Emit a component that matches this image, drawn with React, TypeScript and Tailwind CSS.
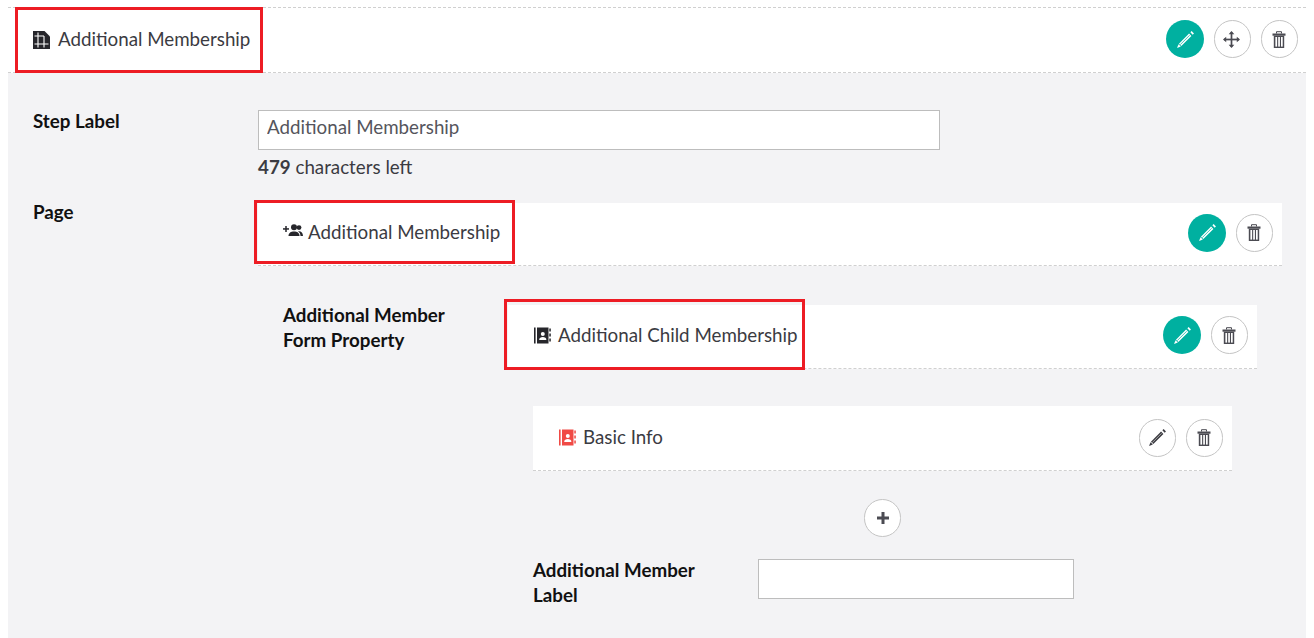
import { ReactNode } from "react";

function PencilIcon({ stripe }: { stripe: string }) {
  return (
    <svg viewBox="0 0 18 18" className="h-[19px] w-[19px]">
      <path d="M13.6 2.2l1.2-1.2 2.2 2.2-1.2 1.2z" fill="currentColor" />
      <path d="M12.4 3.4l2.2 2.2-9.6 9.6-2.2-2.2z" fill="currentColor" />
      <path d="M2.4 13.4l2.2 2.2-3.6 1.4z" fill="currentColor" />
      <path d="M12.9 5l-9 9" stroke={stripe} strokeWidth="0.7" fill="none" />
    </svg>
  );
}

function TrashIcon() {
  return (
    <svg viewBox="0 0 14 17" className="h-[17px] w-[14px]">
      <path d="M4.5 2.5V.7h5v1.8" fill="none" stroke="#4b4b52" strokeWidth="1" />
      <rect x="0.5" y="2.5" width="13" height="2.2" fill="#4b4b52" />
      <path d="M1.8 4.7h10.4V17H1.8z" fill="#4b4b52" />
      <rect x="3.4" y="6" width="1.7" height="9.6" fill="#fff" />
      <rect x="6.2" y="6" width="1.7" height="9.6" fill="#fff" />
      <rect x="9" y="6" width="1.7" height="9.6" fill="#fff" />
    </svg>
  );
}

function MoveIcon() {
  return (
    <svg viewBox="0 0 18 18" className="mr-[1px] h-[17px] w-[17px]" fill="#4b4b52">
      <rect x="1" y="8.1" width="16" height="1.8" />
      <rect x="8.1" y="1" width="1.8" height="16" />
      <path d="M9 0l3 3.4H6zM9 18l-3-3.4h6zM0 9l3.4-3v6zM18 9l-3.4 3V6z" />
    </svg>
  );
}

function PlusIcon() {
  return (
    <svg viewBox="0 0 12 12" className="h-[12px] w-[12px]" fill="#4b4b52">
      <rect x="0" y="4.5" width="12" height="3" />
      <rect x="4.5" y="0" width="3" height="12" />
    </svg>
  );
}

function PageIcon() {
  return (
    <svg viewBox="0 0 17 18" className="mt-[1px] h-[18px] w-[17px]">
      <path d="M0 0h11.5L17 5.5V18H0z" fill="#26262b" />
      <path d="M5 1.5v15M11 5v11.5M1.5 5h9.5M1.5 13h14" stroke="#fff" strokeWidth="1.1" fill="none" />
    </svg>
  );
}

function GroupAddIcon() {
  return (
    <svg viewBox="0 0 20 13" className="mb-[5px] h-[13px] w-[20px]" fill="#26262b">
      <rect x="0" y="4.2" width="6" height="1.5" />
      <rect x="2.25" y="2" width="1.5" height="6" />
      <circle cx="11" cy="3.2" r="3" />
      <circle cx="16" cy="3.6" r="2.4" />
      <path d="M5.5 12c0-3 2.5-4.4 5.5-4.4s5.5 1.4 5.5 4.4z" />
      <path d="M15 7.2c2.8-.4 5 .9 5 4.8h-2.5c0-2-.9-3.6-2.5-4.8z" />
    </svg>
  );
}

function ContactBookIcon({ color }: { color: string }) {
  return (
    <svg viewBox="0 0 17 17" className="h-[17px] w-[17px]">
      <rect x="0" y="0.5" width="1.6" height="16" fill={color} />
      <rect x="3" y="0.5" width="11.5" height="16" fill={color} />
      <rect x="15.3" y="1.5" width="1.5" height="3" fill={color} />
      <rect x="15.3" y="6.5" width="1.5" height="3" fill={color} />
      <rect x="15.3" y="11.5" width="1.5" height="3" fill={color} />
      <circle cx="8.8" cy="7" r="2" fill="#fff" />
      <path d="M5.2 13c0-2 1.6-2.9 3.6-2.9s3.6.9 3.6 2.9z" fill="#fff" />
    </svg>
  );
}

function RoundButton({ children, active }: { children: ReactNode; active?: boolean }) {
  return (
    <button
      className={
        active
          ? "flex h-[38px] w-[38px] items-center justify-center rounded-full bg-[#00b0a0] text-white"
          : "flex h-[38px] w-[37.5px] items-center justify-center rounded-full border border-[#c4c4c4] bg-white text-[#3a3a40]"
      }
    >
      {children}
    </button>
  );
}

function RedBox({ className }: { className: string }) {
  return <div className={`pointer-events-none absolute border-[3px] border-[#ed1c24] ${className}`} />;
}

function Actions({ move, muted }: { move?: boolean; muted?: boolean }) {
  return (
    <div className="flex items-center gap-[9.5px]">
      <RoundButton active={!muted}>
        <PencilIcon stripe={muted ? "#c9c9c9" : "#00b0a0"} />
      </RoundButton>
      {move && (
        <RoundButton>
          <MoveIcon />
        </RoundButton>
      )}
      <RoundButton>
        <TrashIcon />
      </RoundButton>
    </div>
  );
}

export default function App() {
  return (
    <div className="relative h-[638px] overflow-hidden bg-white pl-2 pr-2 pt-[7px] font-['Lato',sans-serif] text-[18.75px] text-[#3b3b42]">
      <div className="flex h-[66px] items-center justify-between border-y border-dashed border-[#d0d0d0] pb-[2px] pl-[25px] pr-[8px]">
        <div className="flex items-center gap-[8px]">
          <PageIcon />
          <span className="pt-[1px]">Additional Membership</span>
        </div>
        <Actions move />
      </div>
      <RedBox className="left-[15px] top-[7px] h-[66px] w-[248px]" />

      <div className="h-[565px] bg-[#f3f3f5] pl-[25px] pr-[24px] pt-[37px]">
        <div className="flex">
          <label className="w-[225px] font-bold leading-[22px] text-[#111]">Step Label</label>
          <div>
            <input
              readOnly
              value="Additional Membership"
              className="h-[40px] w-[682px] border border-[#bdbdbd] bg-white px-2 pb-[8px] text-[#55555c] outline-none"
            />
            <p className="mt-[5px] leading-[24px]">
              <b className="font-bold">479</b> characters left
            </p>
          </div>
        </div>

        <div className="mt-[24px] flex">
          <label className="-mt-[1px] w-[225px] font-bold leading-[20px] text-[#111]">Page</label>
          <div className="flex-1">
            <div className="flex h-[63px] items-center justify-between border-b border-dashed border-[#d0d0d0] bg-white pb-[3px] pl-[25px] pr-[9px]">
              <div className="flex items-center gap-[5px]">
                <GroupAddIcon />
                <span className="pb-[1px]">Additional Membership</span>
              </div>
              <Actions />
            </div>

            <div className="mt-[39px] flex pl-[25px] pr-[25px]">
              <label className="-mt-[3px] w-[225px] font-bold leading-[25px] text-[#111]">
                Additional Member
                <br />
                Form Property
              </label>
              <div className="flex-1">
                <div className="flex h-[64px] items-center justify-between border-b border-dashed border-[#d0d0d0] bg-white pb-[3px] pl-[26px] pr-[9px]">
                  <div className="flex items-center gap-[7px]">
                    <ContactBookIcon color="#26262b" />
                    <span>Additional Child Membership</span>
                  </div>
                  <Actions />
                </div>

                <div className="ml-[25px] mr-[25px] mt-[37px] flex h-[65px] items-center justify-between border-b border-dashed border-[#d0d0d0] bg-white pb-[1px] pl-[26px] pr-[9px]">
                  <div className="flex items-center gap-[7px]">
                    <ContactBookIcon color="#f04a45" />
                    <span>Basic Info</span>
                  </div>
                  <Actions muted />
                </div>

                <div className="ml-[25px] mr-[25px] mt-[28px] flex justify-center">
                  <RoundButton>
                    <PlusIcon />
                  </RoundButton>
                </div>

                <div className="ml-[25px] mt-[22px] flex">
                  <label className="-mt-[2px] w-[225px] font-bold leading-[25px] text-[#111]">
                    Additional Member
                    <br />
                    Label
                  </label>
                  <input readOnly className="h-[40px] w-[316px] border border-[#bdbdbd] bg-white outline-none" />
                </div>
              </div>
            </div>
          </div>
        </div>
      </div>

      <RedBox className="left-[254px] top-[200px] h-[64px] w-[261px]" />
      <RedBox className="left-[504px] top-[299px] h-[71px] w-[301px]" />
    </div>
  );
}
